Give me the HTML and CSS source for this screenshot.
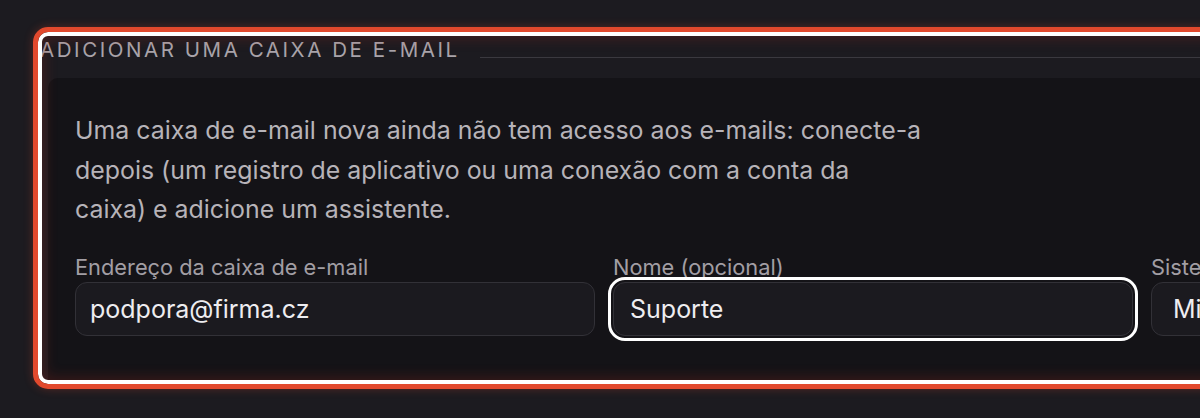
FILE: index.html
```html
<!DOCTYPE html>
<html lang="pt">

<head>
    <meta charset="UTF-8">
    <meta name="viewport" content="width=device-width, initial-scale=1.0">
    <title>Adicionar uma caixa de e-mail</title>
    <link rel="stylesheet" href="styles.css">
</head>

<body>
    <div class="page">
        <section class="frame">
            <div class="legend">
                <span class="legend-text">Adicionar uma caixa de e-mail</span>
                <span class="legend-line"></span>
            </div>
            <div class="panel">
                <p class="intro">Uma caixa de e-mail nova ainda não tem acesso aos e-mails: conecte-a depois (um registro de aplicativo ou uma conexão com a conta da caixa) e adicione um assistente.</p>
                <div class="fields">
                    <label class="field">
                        <span class="field-label">Endereço da caixa de e-mail</span>
                        <input class="field-input" type="text" value="podpora@firma.cz">
                    </label>
                    <label class="field">
                        <span class="field-label">Nome (opcional)</span>
                        <input class="field-input focus" type="text" value="Suporte">
                    </label>
                    <label class="field">
                        <span class="field-label">Sistema</span>
                        <input class="field-input select" type="text" value="Microsoft 365">
                    </label>
                </div>
            </div>
        </section>
    </div>
</body>

</html>
```

FILE: styles.css
```css
* {
    padding: 0;
    margin: 0;
    box-sizing: border-box;
}

body {
    background: #1c1b20;
    font-family: Inter, "Noto Sans", sans-serif;
    overflow: hidden;
    height: 418px;
}

.page {
    padding: 27px 0 0 33px;
}

.frame {
    position: relative;
    width: 1300px;
    height: 362px;
    border-radius: 15px;
    padding-left: 7px;
    display: flex;
    flex-direction: column;
    box-shadow: 0 0 10px rgba(226, 73, 45, 0.3);
}

/* highlight ring drawn over the content */
.frame::after {
    content: "";
    position: absolute;
    top: 0;
    left: 0;
    right: 0;
    bottom: 0;
    border: 5px solid #e2492d;
    border-radius: 15px;
    box-shadow: inset 0 0 0 4px #fff, inset 0 0 14px 6px rgba(160, 40, 30, 0.3);
    pointer-events: none;
}

.legend {
    display: flex;
    margin-top: 11px;
    height: 24px;
}

.legend-text {
    font-size: 20.5px;
    line-height: 24px;
    text-transform: uppercase;
    letter-spacing: 0.125em;
    color: #a9a4aa;
    white-space: nowrap;
}

.legend-line {
    flex: 1;
    height: 1px;
    margin: 19px 0 0 20px;
    background: #3a393f;
}

.panel {
    flex: 1;
    margin: 16px 0 0 8px;
    padding: 33px 0 0 27px;
    background: #141317;
    border-radius: 10px 0 0 0;
}

.intro {
    font-size: 24.9px;
    line-height: 39.5px;
    color: #b7b3b9;
    max-width: 851px;
}

.fields {
    display: grid;
    grid-template-columns: 520px 520px 520px;
    column-gap: 18px;
    margin-top: 25px;
}

.field {
    display: flex;
    flex-direction: column;
}

.field-label {
    font-size: 21.8px;
    line-height: 24px;
    color: #a29ea4;
    margin-bottom: 3px;
}

.field-input {
    height: 54px;
    padding: 0 14px;
    border: 1px solid #323137;
    border-radius: 12px;
    background: #1b1a1f;
    color: #eeedf0;
    font-family: inherit;
    font-size: 25px;
    outline: none;
}

.field-input.focus {
    outline: 3px solid #fff;
    outline-offset: 2px;
    padding-left: 16px;
}

.field-input.select {
    padding-left: 21px;
}
```
